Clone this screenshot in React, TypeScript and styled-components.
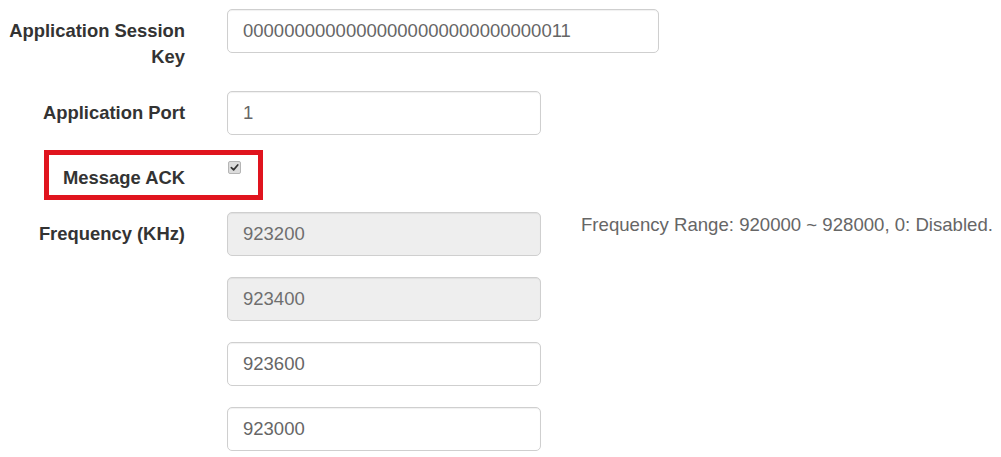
import React from "react";
import styled, { createGlobalStyle } from "styled-components";

const Global = createGlobalStyle`
  html, body { margin: 0; padding: 0; background: #ffffff; }
  body { font-family: "Liberation Sans", Arial, sans-serif; }
`;

const Form = styled.form`
  display: flex;
  flex-direction: column;
  gap: 21px;
  padding: 9px 0 0 0;
`;

const Row = styled.div`
  position: relative;
  display: grid;
  grid-template-columns: 185px 314px auto;
  column-gap: 42px;
  align-items: start;
`;

const WideRow = styled(Row)`
  grid-template-columns: 185px 432px;
`;

const Label = styled.label`
  display: block;
  padding-left: 6px;
  padding-top: 9px;
  text-align: right;
  font-size: 18.4px;
  line-height: 26px;
  font-weight: 700;
  color: #333333;
`;

const Input = styled.input`
  box-sizing: border-box;
  width: 100%;
  height: 44px;
  padding: 0 15px;
  font-family: "Liberation Sans", Arial, sans-serif;
  font-size: 18.5px;
  color: #666666;
  background: #ffffff;
  border: 1px solid #cfcfcf;
  border-radius: 5px;
  box-shadow: inset 0 1px 1px rgba(0, 0, 0, 0.06);
  outline: none;
  &:disabled {
    background: #eeeeee;
    color: #6e6e6e;
    -webkit-text-fill-color: #6e6e6e;
    opacity: 1;
  }
`;

const Stack = styled.div`
  display: flex;
  flex-direction: column;
  gap: 21px;
`;

const Help = styled.span`
  display: block;
  margin-left: -2px;
  font-size: 18.6px;
  line-height: 26px;
  color: #666666;
  white-space: nowrap;
`;

const CheckCell = styled.div`
  display: flex;
  align-items: flex-start;
  padding-top: 5px;
  padding-left: 1px;
`;

const CheckBox = styled.span`
  box-sizing: border-box;
  width: 13px;
  height: 13px;
  border: 1px solid #b5b5b5;
  border-radius: 2px;
  background: #dcdcdc;
  display: flex;
  align-items: center;
  justify-content: center;
`;

const Highlight = styled.div`
  position: absolute;
  left: 44px;
  top: -6px;
  width: 219px;
  height: 50px;
  box-sizing: border-box;
  border: 5px solid #e0141e;
  pointer-events: none;
`;

export default function App() {
  const freqs = [
    { v: "923200", disabled: true },
    { v: "923400", disabled: true },
    { v: "923600", disabled: false },
    { v: "923000", disabled: false },
  ];
  return (
    <>
      <Global />
      <Form>
        <WideRow>
          <Label>Application Session Key</Label>
          <Input defaultValue="00000000000000000000000000000011" />
        </WideRow>
        <Row>
          <Label>Application Port</Label>
          <Input defaultValue="1" />
        </Row>
        <Row>
          <Label>Message ACK</Label>
          <CheckCell>
            <CheckBox>
              <svg width="9" height="9" viewBox="0 0 10 10">
                <path
                  d="M1.5 5.2 L4 7.6 L8.6 2.2"
                  fill="none"
                  stroke="#333"
                  strokeWidth="1.9"
                  strokeLinecap="round"
                  strokeLinejoin="round"
                />
              </svg>
            </CheckBox>
          </CheckCell>
          <Highlight />
        </Row>
        <Row>
          <Label>Frequency (KHz)</Label>
          <Stack>
            {freqs.map((f) => (
              <Input key={f.v} defaultValue={f.v} disabled={f.disabled} />
            ))}
          </Stack>
          <Help>Frequency Range: 920000 ~ 928000, 0: Disabled.</Help>
        </Row>
      </Form>
    </>
  );
}
